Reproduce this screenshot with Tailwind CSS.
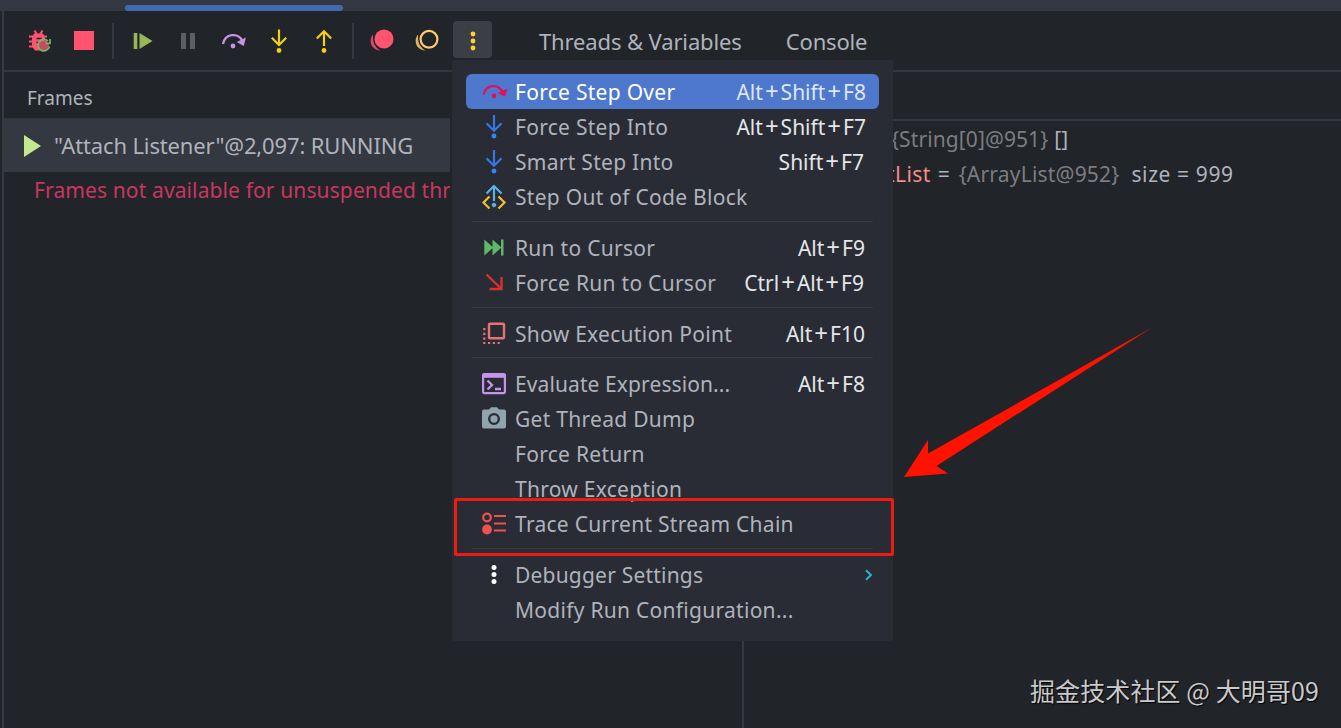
<!DOCTYPE html>
<html lang="zh">
<head>
<meta charset="UTF-8">
<title>Debugger</title>
<script src="https://cdn.jsdelivr.net/npm/@tailwindcss/browser@4"></script>
</head>
<body class="bg-[#212429]">
<div class="relative flex flex-col w-[1341px] h-[728px] overflow-hidden bg-[#212429] text-[#afb3bc] text-[21px] leading-none font-['Noto_Sans','Noto_Sans_CJK_SC',sans-serif] whitespace-nowrap">

    <!-- Tab strip -->
    <div class="h-[11px] shrink-0 bg-[#343843] pl-[125px] pt-[5px]">
        <div class="w-[218px] h-[6px] rounded-[3px] bg-[#4269b4]"></div>
    </div>

    <div class="flex flex-col flex-1 ml-[2px] border-l-2 border-[#363a40]">
        <!-- Toolbar -->
        <div class="flex items-center h-[61px] shrink-0 border-b-2 border-[#34373d]">
            <svg class="ml-[23px] w-6 h-6" viewBox="0 0 24 24">
                <g fill="#ff5370" stroke="#ff5370">
                    <path d="M7 4.500h9l2 4v9l-3 4H8l-3-4v-9z" stroke="none"/>
                    <path d="M7.500 1.500l2.500 4M15.500 1.500l-2.500 4M2 7.500h18M2 12.500h18M2 17.500h18" stroke-width="2" fill="none"/>
                </g>
                <path d="M9.500 9.500h5M9.500 13.500h3" stroke="#212429" stroke-width="1.500"/>
                <circle cx="17" cy="17" r="5" fill="#c94a60"/>
                <g fill="none" stroke="#6dbb6a" stroke-width="1.700"><path d="M22.500 17.500a5.800 5.800 0 1 1-1.500-5.500M23 10v4.300h-4.500"/></g>
            </svg>
            <div class="ml-[23px] w-5 h-[19px] bg-[#ff5370]"></div>
            <div class="ml-[18px] w-[2px] h-9 bg-[#34373d]"></div>
            <svg class="ml-[18px] w-6 h-6" viewBox="0 0 24 24"><path d="M1.700 4h3.600v16H1.700zM7.500 4l13 8-13 8z" fill="#98b657"/></svg>
            <svg class="ml-[22px] w-6 h-6" viewBox="0 0 24 24"><path d="M3 4h5v16H3zM12 4h5v16h-5z" fill="#5c6065"/></svg>
            <svg class="ml-[19px] w-[26px] h-6" viewBox="0 0 26 24">
                <path d="M2 15C4 4.500 17 3 21.500 12" fill="none" stroke="#c792ea" stroke-width="2.300"/>
                <path d="M25 8.500l-2.300 8.500-7-4z" fill="#c792ea"/><circle cx="12" cy="17" r="2.400" fill="#c792ea"/>
            </svg>
            <svg class="ml-[20px] w-6 h-6" viewBox="0 0 24 24">
                <path d="M12 .5v15.500M4.800 8.800l7.200 7.200 7.200-7.200" fill="none" stroke="#f5cf12" stroke-width="2.200"/><circle cx="12" cy="21.500" r="2.400" fill="#f5cf12"/>
            </svg>
            <svg class="ml-[21px] w-6 h-6" viewBox="0 0 24 24">
                <path d="M12 17V2M4.800 9.500L12 2.300l7.200 7.200" fill="none" stroke="#f5cf12" stroke-width="2.200"/><circle cx="12" cy="21.500" r="2.400" fill="#f5cf12"/>
            </svg>
            <div class="ml-[16px] w-[2px] h-9 bg-[#34373d]"></div>
            <svg class="ml-[16px] w-6 h-6" viewBox="0 0 24 24">
                <circle cx="14" cy="10" r="9.500" fill="#ff5370"/><path d="M3.200 5.500C-1.500 10 0 21 10.500 21.500C5 18.500 2.200 13.500 3.200 5.500z" fill="#d9496a"/>
            </svg>
            <svg class="ml-[21px] w-6 h-6" viewBox="0 0 24 24">
                <circle cx="14" cy="10.300" r="8.400" fill="none" stroke="#ffcb6b" stroke-width="2.200"/><path d="M3.200 5.500C-1.500 10 0 21 10.500 21.500C5 18.500 2.200 13.500 3.200 5.500z" fill="#dfb263"/>
            </svg>
            <div class="ml-[14px] w-[39px] h-[37px] -mt-[2px] rounded-[4px] bg-[#3b3f45] flex items-center justify-center">
                <svg class="w-6 h-6" viewBox="0 0 24 24" fill="#ffd42f"><circle cx="12" cy="6" r="2.400"/><circle cx="12" cy="13" r="2.400"/><circle cx="12" cy="20" r="2.400"/></svg>
            </div>
            <span class="ml-[47px] text-[22px] tracking-[-0.13px]">Threads &amp; Variables</span>
            <span class="ml-[44px] text-[22px] tracking-[-0.16px]">Console</span>
        </div>

        <div class="flex flex-1">
            <!-- Frames -->
            <div class="w-[446px] overflow-hidden">
                <div class="h-[47px] pl-[23px] flex items-center pt-[7px] text-[19px] border-b border-[#303339]">Frames</div>
                <div class="h-[53px] flex items-center bg-[#343840]">
                    <svg class="ml-[20px] w-[17px] h-[22px]" viewBox="0 0 17 22"><path d="M0 0l17 11L0 22z" fill="#c3e88d"/></svg>
                    <span class="ml-[13px] pb-[2px] text-[22px] tracking-[-0.14px]">"Attach Listener"@2,097: RUNNING</span>
                </div>
                <div class="pl-[30px] h-9 flex items-center tracking-[0.12px] text-[#c9375f]">Frames not available for unsuspended threads</div>
            </div>
            <div class="w-[292px]"></div>
            <!-- Variables -->
            <div class="flex-1 border-l-2 border-[#34373d]">
                <div class="h-[49px] border-b-2 border-[#34373d]"></div>
                <div class="pl-[147px] pt-[1px]">
                    <div class="h-[35px] flex items-center"><span class="tracking-[0.1px] text-[#7b7d80]">{String[0]@951}</span><span class="ml-[6px]">[]</span></div>
                    <div class="h-[35px] flex items-center"><span class="-ml-[4px] tracking-[0.4px] text-[#f78c8c]">tList</span><span class="ml-[7px]">=</span><span class="ml-[9px] tracking-[0.2px] text-[#7b7d80]">{ArrayList@952}</span><span class="ml-[12px] tracking-[0.6px]">size = 999</span></div>
                </div>
            </div>
        </div>
    </div>

    <!-- More actions popup -->
    <div class="absolute left-[452px] top-[60px] w-[441px] h-[581px] rounded-[2px] bg-[#292c34] pt-[14px] px-[14px] tracking-[0.28px] [&_span]:pt-[2px]">
        <div class="h-[35px] pl-4 pr-[13px] flex items-center rounded-[6px] bg-[#4d78cc] text-white">
            <svg class="w-6 h-6 mr-[9px] overflow-visible" viewBox="0 0 24 24">
                <path d="M1.500 14.500C4 4 16.500 3.500 20.500 12" fill="none" stroke="#e0105f" stroke-width="2.300"/><path d="M25.500 8.500L23 16.500l-7.500-3.500z" fill="#e0105f"/><circle cx="12" cy="16" r="2.400" fill="#e0105f"/>
            </svg>
            <span>Force Step Over</span><span class="ml-auto tracking-normal text-[#dfe6f6]">Alt<i class="not-italic text-[24px] leading-[0] mx-[2px]">+</i>Shift<i class="not-italic text-[24px] leading-[0] mx-[2px]">+</i>F8</span>
        </div>
        <div class="h-[35px] pl-4 pr-[13px] flex items-center">
            <svg class="w-6 h-6 mr-[9px]" viewBox="0 0 24 24"><path d="M12 0v15.500M4.500 8.300l7.500 7.500 7.500-7.500" fill="none" stroke="#3478e8" stroke-width="2.200"/><circle cx="12" cy="21" r="2.400" fill="#3a84ee"/></svg>
            <span>Force Step Into</span><span class="ml-auto tracking-normal text-[#e4e6ea]">Alt<i class="not-italic text-[24px] leading-[0] mx-[2px]">+</i>Shift<i class="not-italic text-[24px] leading-[0] mx-[2px]">+</i>F7</span>
        </div>
        <div class="h-[35px] pl-4 pr-[15px] flex items-center">
            <svg class="w-6 h-6 mr-[9px]" viewBox="0 0 24 24"><path d="M12 0v15.500M4.500 8.300l7.500 7.500 7.500-7.500" fill="none" stroke="#3478e8" stroke-width="2.200"/><circle cx="12" cy="21" r="2.400" fill="#3a84ee"/></svg>
            <span>Smart Step Into</span><span class="ml-auto tracking-normal text-[#e4e6ea]">Shift<i class="not-italic text-[24px] leading-[0] mx-[2px]">+</i>F7</span>
        </div>
        <div class="h-[35px] pl-4 pr-[13px] flex items-center">
            <svg class="w-6 h-6 mr-[9px] overflow-visible" viewBox="0 0 24 24" fill="none" stroke-width="2.200"><path d="M12 16V1M4.500 8.500L12 1l7.500 7.500" stroke="#5fb0ea"/><path d="M7.500 11.500l-6 6 6 6M16.500 11.500l6 6-6 6" stroke="#f2bd35"/><circle cx="12" cy="20" r="1.800" fill="#5fb0ea" stroke="#5fb0ea" stroke-width="1"/></svg>
            <span>Step Out of Code Block</span>
        </div>
        <div class="h-4 pt-[7px] px-[6px]"><div class="h-px bg-[#353941]"></div></div>
        <div class="h-[35px] pl-4 pr-[14px] flex items-center">
            <svg class="w-6 h-6 mr-[9px]" viewBox="0 0 24 24"><path d="M2.300 3.500l9 8-9 8zM10.500 3.500l9 8-9 8zM19 3.500h2.500v16H19z" fill="#5fb865"/></svg>
            <span>Run to Cursor</span><span class="ml-auto tracking-normal text-[#e4e6ea]">Alt<i class="not-italic text-[24px] leading-[0] mx-[2px]">+</i>F9</span>
        </div>
        <div class="h-[35px] pl-4 pr-[15px] flex items-center">
            <svg class="w-6 h-6 mr-[9px]" viewBox="0 0 24 24"><path d="M4.500 3.500l15 14.500M19.500 6v12h-12" fill="none" stroke="#d8322f" stroke-width="2.400"/></svg>
            <span>Force Run to Cursor</span><span class="ml-auto tracking-normal text-[#e4e6ea]">Ctrl<i class="not-italic text-[24px] leading-[0] mx-[2px]">+</i>Alt<i class="not-italic text-[24px] leading-[0] mx-[2px]">+</i>F9</span>
        </div>
        <div class="h-4 pt-[7px] px-[6px]"><div class="h-px bg-[#353941]"></div></div>
        <div class="h-[35px] pl-4 pr-[14px] flex items-center">
            <svg class="w-6 h-6 mr-[9px]" viewBox="0 0 24 24"><rect x="7" y="1.700" width="15" height="14.500" rx="1" fill="none" stroke="#e57373" stroke-width="2.400"/><path d="M2.300 6v16M1.200 21h17" fill="none" stroke="#e57373" stroke-width="2.200" stroke-dasharray="2.200 2.600"/></svg>
            <span>Show Execution Point</span><span class="ml-auto tracking-normal text-[#e4e6ea]">Alt<i class="not-italic text-[24px] leading-[0] mx-[2px]">+</i>F10</span>
        </div>
        <div class="h-[15px] pt-[6px] px-[6px]"><div class="h-px bg-[#353941]"></div></div>
        <div class="h-[35px] pl-4 pr-[14px] flex items-center">
            <svg class="w-6 h-6 mr-[9px]" viewBox="0 0 24 24" fill="none" stroke="#c792ea"><rect x="1.100" y="2.100" width="21.800" height="19" rx="1" stroke-width="2.200"/><path d="M1 3.800h22" stroke-width="4"/><path d="M5.500 8.500l4.500 4.500-4.500 4.500M13 17h6" stroke-width="2.300"/></svg>
            <span class="tracking-[0.1px]">Evaluate Expression...</span><span class="ml-auto tracking-normal text-[#e4e6ea]">Alt<i class="not-italic text-[24px] leading-[0] mx-[2px]">+</i>F8</span>
        </div>
        <div class="h-[35px] pl-4 pr-[13px] flex items-center">
            <svg class="w-6 h-6 mr-[9px]" viewBox="0 0 24 24"><path d="M2 2.500h5L9 .2h6l2 2.300h5q2 0 2 2V19.500q0 2-2 2H2q-2 0-2-2V4.500q0-2 2-2z" fill="#90a4ae"/><circle cx="12" cy="12" r="4.800" fill="none" stroke="#292c34" stroke-width="2.300"/></svg>
            <span>Get Thread Dump</span>
        </div>
        <div class="h-[35px] pl-[49px] flex items-center"><span>Force Return</span></div>
        <div class="h-[35px] pl-[49px] flex items-center"><span>Throw Exception</span></div>
        <div class="h-[35px] pl-4 pr-[13px] flex items-center">
            <svg class="w-6 h-6 mr-[9px]" viewBox="0 0 24 24" fill="none" stroke="#ef5350" stroke-width="2.200"><circle cx="5" cy="5.500" r="3.800"/><circle cx="5" cy="17.500" r="3.800" fill="#ef5350"/><path d="M12 4h12M12 11.500h12M12 18.500h12"/></svg>
            <span>Trace Current Stream Chain</span>
        </div>
        <div class="h-4 pt-[7px] px-[6px]"><div class="h-px bg-[#353941]"></div></div>
        <div class="h-[35px] pl-4 pr-[6px] flex items-center">
            <svg class="w-6 h-6 mr-[9px]" viewBox="0 0 24 24" fill="#fff"><circle cx="12" cy="4.500" r="2.500"/><circle cx="12" cy="11.500" r="2.500"/><circle cx="12" cy="18.500" r="2.500"/></svg>
            <span class="tracking-[0.2px]">Debugger Settings</span>
            <svg class="ml-auto w-[9px] h-3" viewBox="0 0 9 12"><path d="M2 1.200L7 6l-5 4.800" fill="none" stroke="#26b6cf" stroke-width="1.900"/></svg>
        </div>
        <div class="h-[35px] pl-[49px] flex items-center"><span>Modify Run Configuration...</span></div>
    </div>

    <!-- Annotations -->
    <div class="absolute left-[454px] top-[498px] w-[440px] h-[58px] rounded-[2px] border-[3px] border-[#ee1c10]"></div>
    <svg class="absolute left-[900px] top-[320px] w-[260px] h-[165px]" viewBox="900 320 260 165"><path d="M904 477l24-37v13.500L1152 327.500 936.500 466l11.500 7.500z" fill="#ff1200"/></svg>
    <div class="absolute left-[1030px] top-[678px] text-[25px] tracking-[0.1px] text-[#c9cacb] font-['Noto_Sans_CJK_SC',sans-serif] [text-shadow:1px_1px_1px_#000]">掘金技术社区 @ 大明哥09</div>
</div>
</body>
</html>
